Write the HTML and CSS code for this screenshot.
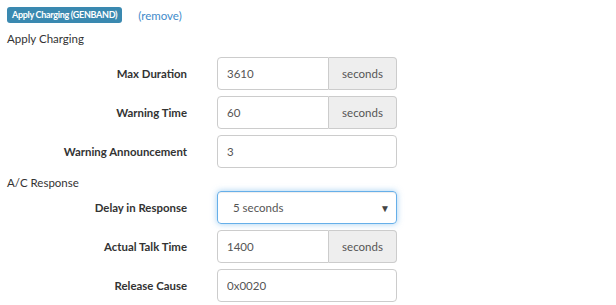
FILE: index.html
```html
<!DOCTYPE html>
<html lang="en">
<head>
    <meta charset="UTF-8">
    <title>Apply Charging</title>
    <link rel="stylesheet" href="styles.css">
</head>
<body>
    <div class="action-header">
        <span class="action-badge">Apply Charging (GENBAND)</span>
        <a class="remove-link" href="#">(remove)</a>
    </div>

    <div class="section-title">Apply Charging</div>

    <div class="form-row">
        <label class="form-label">Max Duration</label>
        <div class="input-group">
            <input class="form-input" type="text" value="3610">
            <span class="input-addon">seconds</span>
        </div>
    </div>

    <div class="form-row">
        <label class="form-label">Warning Time</label>
        <div class="input-group">
            <input class="form-input" type="text" value="60">
            <span class="input-addon">seconds</span>
        </div>
    </div>

    <div class="form-row">
        <label class="form-label">Warning Announcement</label>
        <div class="input-group">
            <input class="form-input" type="text" value="3">
        </div>
    </div>

    <div class="section-title">A/C Response</div>

    <div class="form-row">
        <label class="form-label">Delay in Response</label>
        <div class="select-box">
            <span class="select-value">5 seconds</span>
            <span class="select-arrow">&#9660;</span>
        </div>
    </div>

    <div class="form-row">
        <label class="form-label">Actual Talk Time</label>
        <div class="input-group">
            <input class="form-input" type="text" value="1400">
            <span class="input-addon">seconds</span>
        </div>
    </div>

    <div class="form-row">
        <label class="form-label">Release Cause</label>
        <div class="input-group">
            <input class="form-input" type="text" value="0x0020">
        </div>
    </div>
</body>
</html>
```

FILE: styles.css
```css
* {
    margin: 0;
    padding: 0;
    box-sizing: border-box;
}

body {
    background: #fff;
    color: #333;
    font-family: 'Lato', 'Open Sans', sans-serif;
    font-size: 11.5px;
    padding: 7px;
}

.action-header {
    display: flex;
    align-items: center;
    gap: 16px;
    height: 16px;
    margin-bottom: 7px;
}

.action-badge {
    background: #3a89b0;
    color: #fff;
    font-weight: bold;
    font-size: 9px;
    letter-spacing: -0.3px;
    line-height: 16px;
    padding: 0 5px;
    border-radius: 3px;
}

.remove-link {
    color: #428bca;
    text-decoration: none;
    font-size: 11.5px;
}

.section-title {
    line-height: 17px;
    margin-bottom: 10px;
}

.form-row + .section-title {
    margin-bottom: 0;
}

/* Label column + control column */
.form-row {
    display: grid;
    grid-template-columns: 180px 180px;
    column-gap: 30px;
    align-items: center;
    margin-bottom: 6px;
}

.form-label {
    text-align: right;
    font-weight: bold;
    font-size: 11.4px;
}

.input-group {
    display: flex;
    height: 33px;
}

.form-input {
    flex: 1;
    min-width: 0;
    height: 33px;
    border: 1px solid #ccc;
    border-radius: 4px;
    padding: 0 9px;
    font-family: inherit;
    font-size: 11.5px;
    color: #555;
    background: #fff;
    outline: none;
}

.input-group .form-input:not(:last-child) {
    border-top-right-radius: 0;
    border-bottom-right-radius: 0;
}

.input-addon {
    width: 68px;
    display: flex;
    align-items: center;
    justify-content: center;
    background: #eee;
    border: 1px solid #ccc;
    border-left: none;
    border-radius: 0 4px 4px 0;
    color: #555;
}

.select-box {
    height: 33px;
    display: flex;
    align-items: center;
    justify-content: space-between;
    border: 1px solid #66afe9;
    border-radius: 4px;
    box-shadow: inset 0 1px 1px rgba(0, 0, 0, 0.075), 0 0 6px rgba(102, 175, 233, 0.6);
    padding: 0 6px 0 15px;
    color: #555;
}

.select-arrow {
    font-size: 10px;
    color: #444;
}
```
